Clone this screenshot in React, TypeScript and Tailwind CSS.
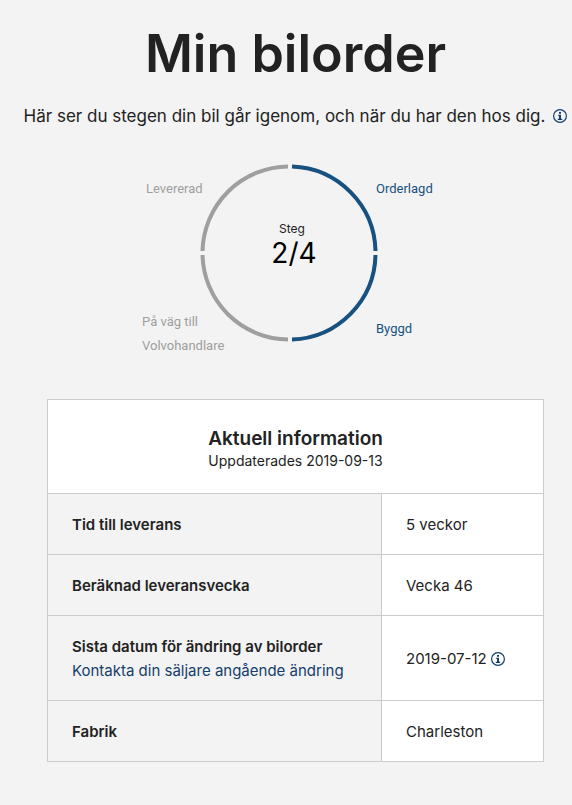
import type { ReactNode } from "react";

type orderRowType = {
  label: string;
  value: string;
  link?: string;
  info?: boolean;
};

const rows: orderRowType[] = [
  { label: "Tid till leverans", value: "5 veckor" },
  { label: "Beräknad leveransvecka", value: "Vecka 46" },
  {
    label: "Sista datum för ändring av bilorder",
    value: "2019-07-12",
    link: "Kontakta din säljare angående ändring",
    info: true,
  },
  { label: "Fabrik", value: "Charleston" },
];

// round info button
function InfoButton({ label }: { label: string }) {
  return (
    <button type="button" aria-label={label} className="shrink-0 cursor-pointer text-[#14406b]">
      <svg width="14" height="14" viewBox="0 0 14 14" fill="none">
        <circle cx="7" cy="7" r="6.4" stroke="currentColor" strokeWidth="1.2" />
        <path d="M6 3h2v1.7H6zM5 5.7h3v4h1.2v1.2H4.8V9.7H6V6.8H5z" fill="currentColor" />
      </svg>
    </button>
  );
}

// ring with the four delivery steps
function StepRing() {
  return (
    <svg width="307" height="200" viewBox="0 0 307 200" className="mx-auto block">
      <g fill="none" strokeWidth="4">
        <path d="M150 11.5A86.5 86.5 0 0 1 233.5 96" stroke="#17517f" />
        <path d="M233.5 100A86.5 86.5 0 0 1 150 184.5" stroke="#17517f" />
        <path d="M146 184.5A86.5 86.5 0 0 1 60.5 100" stroke="#9f9f9f" />
        <path d="M60.5 96A86.5 86.5 0 0 1 146 11.5" stroke="#9f9f9f" />
      </g>
      <g className="font-[Roboto,sans-serif] text-[13px]">
        <text x="234" y="38" fill="#17517f">Orderlagd</text>
        <text x="234" y="178" fill="#17517f">Byggd</text>
        <text x="4" y="38" fill="#9f9f9f">Levererad</text>
        <text x="0" y="171" fill="#9f9f9f">På väg till</text>
        <text x="0" y="195" fill="#9f9f9f">Volvohandlare</text>
      </g>
      <text x="150" y="78" textAnchor="middle" className="text-[12px]" fill="#222222">Steg</text>
      <text x="152" y="108" textAnchor="middle" className="text-[28px]" fill="#000000">2/4</text>
    </svg>
  );
}

function TableRow({ label, children, link }: { label: string; children: ReactNode; link?: string }) {
  return (
    <tr>
      <th scope="row" className="border border-[#cccccc] px-6 pt-[19px] pb-[17px] text-left font-semibold">
        {label}
        {link && (
          <a href="#kontakt" className="block font-normal text-[#14406b]">
            {link}
          </a>
        )}
      </th>
      <td className="w-[162px] border border-[#cccccc] bg-white px-6 pt-[19px] pb-[17px]">
        <div className="flex items-center gap-1">{children}</div>
      </td>
    </tr>
  );
}

function App() {
  return (
    <main className="min-h-screen bg-[#f3f3f3] pt-6 pb-10 pl-[19px] font-[Inter,sans-serif] text-[#222222]">
      <h1 className="text-center text-[52px] leading-[60px] font-semibold">Min bilorder</h1>
      <div className="mt-5 flex items-center justify-center gap-2">
        <p className="text-[17px] leading-6">
          Här ser du stegen din bil går igenom, och när du har den hos dig.
        </p>
        <InfoButton label="Mer om stegen" />
      </div>

      <div className="mt-[27px]">
        <StepRing />
      </div>

      <div className="mt-11 mr-7 ml-7">
        <table className="w-full border-collapse text-[15px] leading-6">
          <thead>
            <tr>
              <th colSpan={2} className="border border-[#cccccc] bg-white py-6 font-normal">
                <h2 className="text-[19px] leading-[29px] font-semibold">Aktuell information</h2>
                <p className="text-[14px] leading-4">Uppdaterades 2019-09-13</p>
              </th>
            </tr>
          </thead>
          <tbody>
            {rows.map((row) => (
              <TableRow key={row.label} label={row.label} link={row.link}>
                <span>{row.value}</span>
                {row.info && <InfoButton label="Mer om sista datum" />}
              </TableRow>
            ))}
          </tbody>
        </table>
      </div>
    </main>
  );
}

export default App;
